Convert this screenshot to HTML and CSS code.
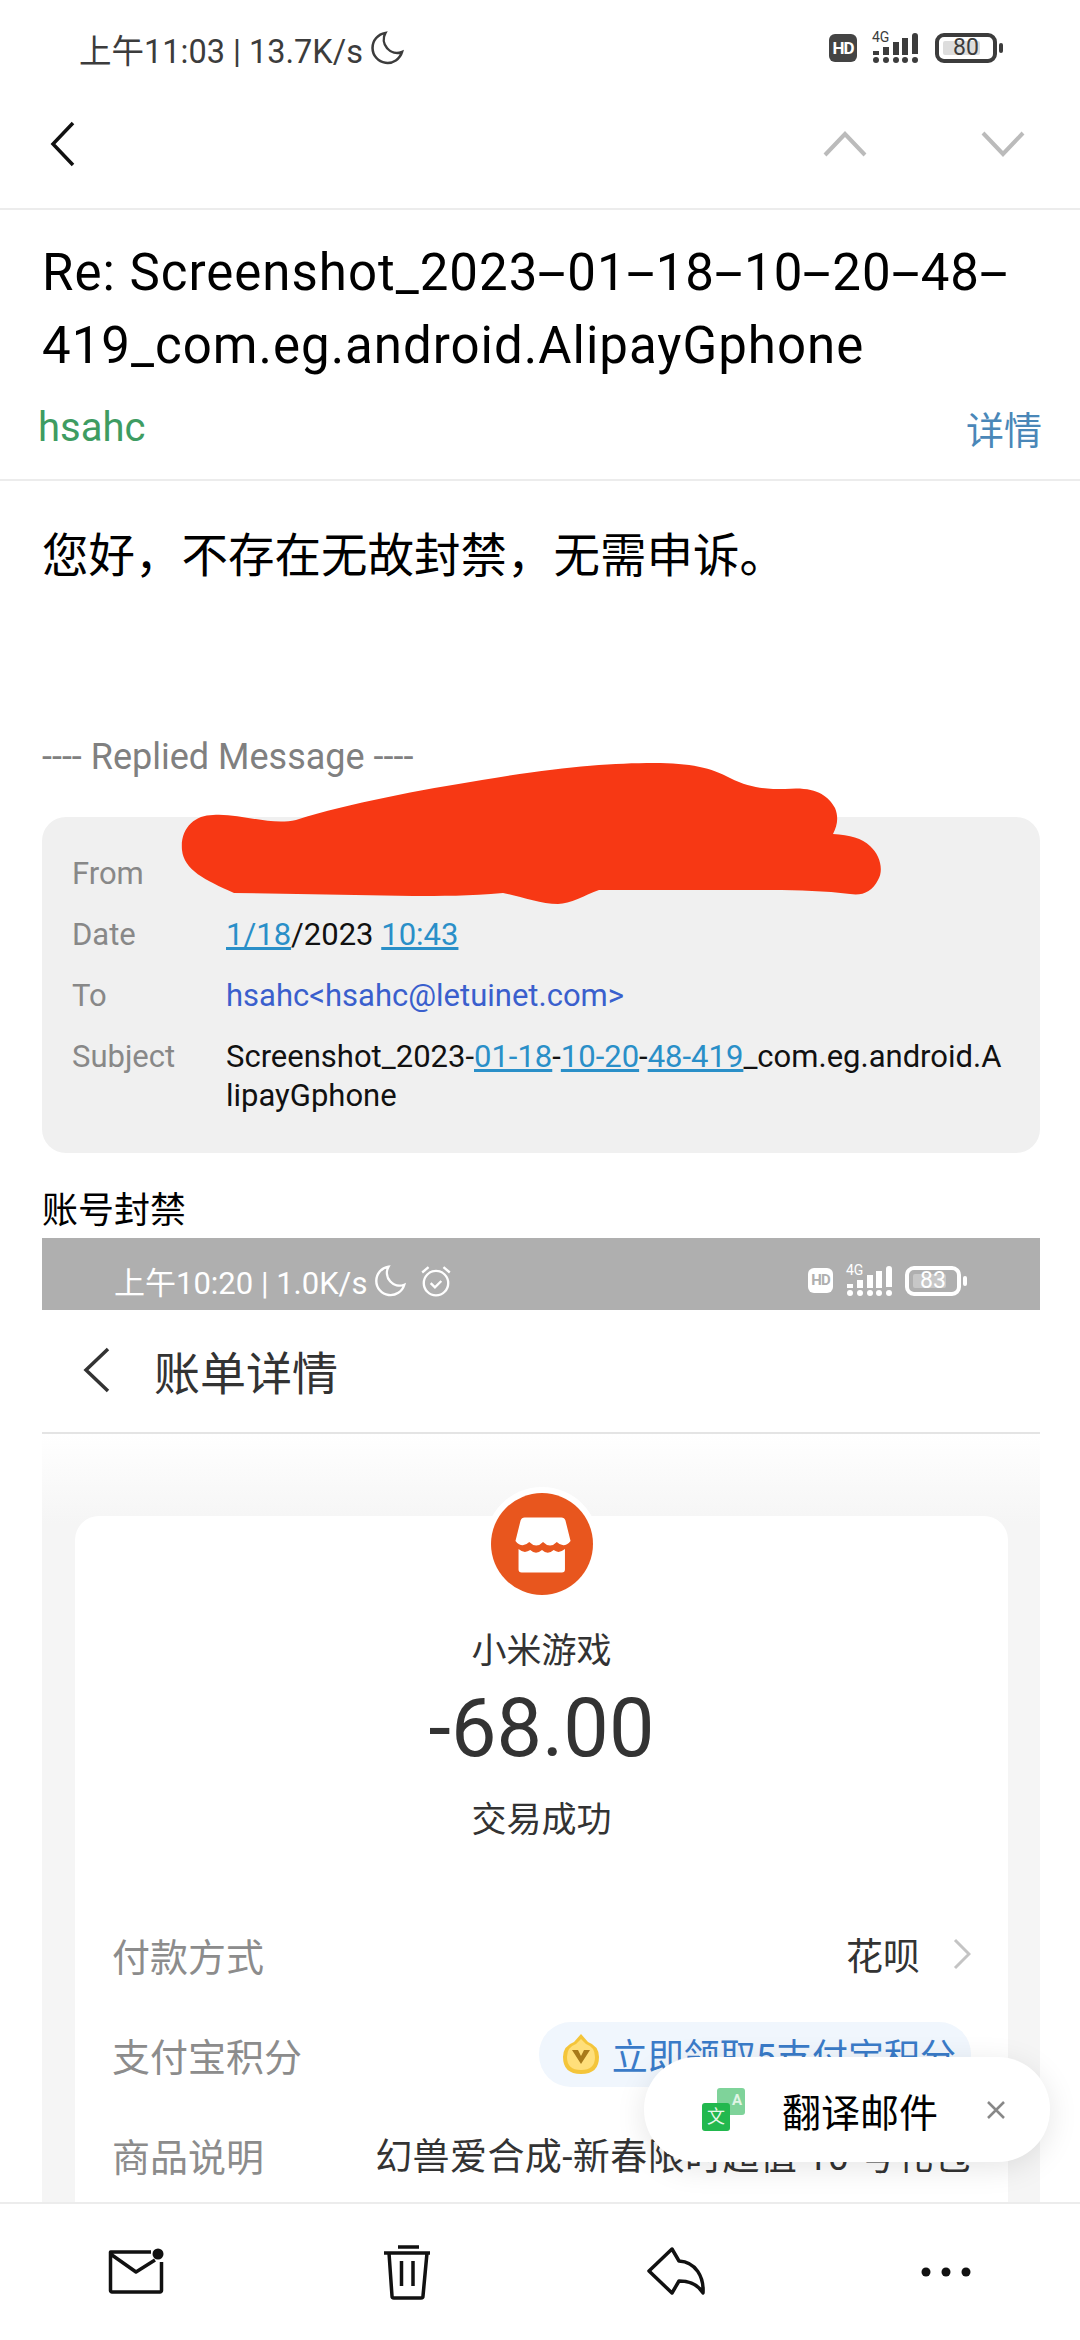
FILE: index.html
```html
<!DOCTYPE html>
<html lang="zh-CN">
<head>
    <meta charset="UTF-8">
    <meta name="viewport" content="width=device-width, initial-scale=1.0">
    <title>Re: Screenshot</title>
    <link rel="stylesheet" href="styles.css">
</head>
<body>
<div class="page">
    <div class="statusbar">
        <div class="status-left">
            <span>上午11:03 | 13.7K/s</span>
            <svg class="moon" viewBox="0 0 24 24"><path d="M11 2.5a9.5 9.5 0 1 0 10.5 12A8.5 8.5 0 0 1 11 2.5z"/></svg>
        </div>
        <div class="status-right">
            <span class="hd">HD</span>
            <div class="signal">
                <span class="net">4G</span>
                <svg viewBox="0 0 46 30"><path d="M1 18h6v4H1zM11 14h6v8h-6zM21 9h6v13h-6zM30 5h6v17h-6zM40 3a2.5 2.5 0 0 1 6 0v18h-6z"/><circle cx="4" cy="27" r="3"/><circle cx="14" cy="27" r="3"/><circle cx="24" cy="27" r="3"/><circle cx="33" cy="27" r="3"/><circle cx="43" cy="27" r="3"/></svg>
            </div>
            <div class="battery"><span class="battery-level" style="width: 80%"></span><span class="battery-num">80</span></div>
            <span class="battery-tip"></span>
        </div>
    </div>

    <div class="toolbar">
        <svg class="back" viewBox="0 0 26 46"><path d="M23 2L3 23l20 21"/></svg>
        <div class="toolbar-arrows">
            <svg class="arrow" viewBox="0 0 44 26"><path d="M2 24L22 3l20 21"/></svg>
            <svg class="arrow" viewBox="0 0 44 26"><path d="M2 2l20 21L42 2"/></svg>
        </div>
    </div>

    <div class="main">
        <div class="mail-head">
            <h1 class="subject">Re: Screenshot_2023<span class="dash">-</span>01<span class="dash">-</span>18<span class="dash">-</span>10<span class="dash">-</span>20<span class="dash">-</span>48<span class="dash">-</span>419_com.eg.android.AlipayGphone</h1>
            <div class="sender-row">
                <span class="sender">hsahc</span>
                <span class="detail-link">详情</span>
            </div>
        </div>

        <div class="mail-body">
            <p class="message">您好，不存在无故封禁，无需申诉。</p>
            <div class="replied">---- Replied Message ----</div>

            <div class="quote">
                <div class="quote-label">From</div><div class="quote-value"></div>
                <div class="quote-label">Date</div><div class="quote-value"><a>1/18</a>/2023 <a>10:43</a></div>
                <div class="quote-label">To</div><div class="quote-value to">hsahc&lt;hsahc@letuinet.com&gt;</div>
                <div class="quote-label">Subject</div><div class="quote-value">Screenshot_2023-<a>01-18</a>-<a>10-20</a>-<a>48-419</a>_com.eg.android.A<br>lipayGphone</div>
            </div>

            <div class="reason">账号封禁</div>

            <div class="shot">
                <div class="statusbar shot-status">
                    <div class="status-left">
                        <span>上午10:20 | 1.0K/s</span>
                        <svg class="moon" viewBox="0 0 24 24"><path d="M11 2.5a9.5 9.5 0 1 0 10.5 12A8.5 8.5 0 0 1 11 2.5z"/></svg>
                        <svg class="alarm" viewBox="0 0 32 32"><circle cx="16" cy="18" r="11.5"/><path d="M11 18l4 4 6-6M3 8l6-5M29 8l-6-5"/></svg>
                    </div>
                    <div class="status-right">
                        <span class="hd">HD</span>
                        <div class="signal">
                            <span class="net">4G</span>
                            <svg viewBox="0 0 46 30"><path d="M1 18h6v4H1zM11 14h6v8h-6zM21 9h6v13h-6zM30 5h6v17h-6zM40 3a2.5 2.5 0 0 1 6 0v18h-6z"/><circle cx="4" cy="27" r="3"/><circle cx="14" cy="27" r="3"/><circle cx="24" cy="27" r="3"/><circle cx="33" cy="27" r="3"/><circle cx="43" cy="27" r="3"/></svg>
                        </div>
                        <div class="battery"><span class="battery-level" style="width: 83%"></span><span class="battery-num">83</span></div>
                        <span class="battery-tip"></span>
                    </div>
                </div>
                <div class="shot-nav">
                    <svg class="shot-back" viewBox="0 0 28 46"><path d="M25 2L3 23l22 21"/></svg>
                    <span>账单详情</span>
                </div>
                <div class="shot-body">
                    <div class="bill">
                        <div class="bill-logo">
                            <svg viewBox="0 0 100 100"><circle cx="50" cy="50" r="50" fill="#e8561e"/><path fill="#fff" d="M31 24H69q3 0 4 3l5 20q-6.5 8-13.5 1q-6.5 7-13.5 0q-6.5 7-13.5 0q-7 7-13.5-1l5-20q1-3 4-3z"/><path fill="#fff" d="M27 55q5.5 5 11.5 1q5.5 5 11.5 0q5.5 5 11.5 0q5 4 11-1V75q0 3-3 3H30q-3 0-3-3z"/></svg>
                        </div>
                        <div class="bill-name">小米游戏</div>
                        <div class="bill-amount">-68.00</div>
                        <div class="bill-state">交易成功</div>
                        <div class="bill-rows">
                            <div class="bill-row">
                                <span class="bill-key">付款方式</span>
                                <span class="bill-val">花呗<svg class="chevron" viewBox="0 0 18 32"><path d="M2 2l14 14L2 30"/></svg></span>
                            </div>
                            <div class="bill-row">
                                <span class="bill-key">支付宝积分</span>
                                <span class="points">
                                    <svg class="coin" viewBox="0 0 38 42"><path fill="#f4c53a" d="M19 1l7 8q11 4 11 15 0 17-18 17T1 24Q1 13 12 9z"/><path fill="#ffdf7a" d="M19 6l5 5q9 3 9 13 0 13-14 13T5 24q0-10 9-13z"/><path fill="#a87a1a" d="M10 17h6l3 6 3-6h6l-9 14z"/></svg>
                                    立即领取5支付宝积分
                                </span>
                            </div>
                            <div class="bill-row">
                                <span class="bill-key">商品说明</span>
                                <span class="bill-val long">幻兽爱合成-新春限时超值 10 号礼包</span>
                            </div>
                        </div>
                    </div>
                </div>
            </div>
        </div>
    </div>

    <div class="bottombar">
        <svg class="tool" viewBox="0 0 60 60"><path d="M44 10H3.5v38.5a1.5 1.5 0 0 0 1.5 1.5h48a1.5 1.5 0 0 0 1.5-1.5V20M3.5 12L29 30l19-12"/><circle class="solid" cx="51" cy="12" r="5.5"/></svg>
        <svg class="tool" viewBox="0 0 60 60"><path d="M7 11h46M21 5h21M12 11l3 43a2 2 0 0 0 2 2h27a2 2 0 0 0 2-2l4-43M24.5 19v25M36 19v25"/></svg>
        <svg class="tool" viewBox="0 0 60 60"><path d="M26 7L3 29l23 22 7-12c12 0 20 5 24 12 1-16-7-31-24-32z"/></svg>
        <svg class="tool" viewBox="0 0 60 60"><circle class="solid" cx="10" cy="30" r="4.5"/><circle class="solid" cx="30" cy="30" r="4.5"/><circle class="solid" cx="50" cy="30" r="4.5"/></svg>
    </div>

    <!-- scribble over the sender -->
    <svg class="redact" viewBox="170 750 730 170"><path d="M182 850C180 828 195 815 213 815C240 813 270 826 296 820C350 803 420 790 482 780C560 767 610 763 654 763C690 763 712 768 730 778C750 788 765 789 785 789C815 786 828 795 835 808C839 818 837 826 833 834C850 835 862 838 870 846C880 855 884 870 878 880C872 892 862 896 850 894C825 891 800 890 771 890L599 890C585 895 570 904 558 904C540 904 520 896 503 893C470 896 440 896 413 896L234 893C205 880 184 870 182 850Z"/></svg>

    <div class="translate">
        <svg class="translate-icon" viewBox="0 0 43 43"><rect x="15" y="0" width="28" height="27" rx="3" fill="#7fd39a"/><rect x="0" y="15" width="28" height="28" rx="3" fill="#22b84e"/><text x="14" y="35" class="glyph-zh">文</text><text x="35" y="17" class="glyph-a">A</text></svg>
        <span>翻译邮件</span>
        <svg class="translate-close" viewBox="0 0 20 20"><path d="M2 2l16 16M18 2L2 18"/></svg>
    </div>
</div>
</body>
</html>
```

FILE: styles.css
```css
* {
    box-sizing: border-box;
}
html, body {
    margin: 0;
    padding: 0;
}
body {
    font-family: Roboto, "Noto Sans CJK SC", sans-serif;
    background: #fff;
    color: #000;
}
.page {
    position: relative;
    width: 1080px;
    height: 2340px;
    display: flex;
    flex-direction: column;
    overflow: hidden;
    background: #fff;
}

/* status bar */
.statusbar {
    display: flex;
    align-items: center;
    justify-content: space-between;
    height: 96px;
    padding: 0 77px 0 79px;
    color: #3c3c3c;
    flex-shrink: 0;
}
.status-left {
    display: flex;
    align-items: center;
    gap: 5px;
    font-size: 32.5px;
}
.status-right {
    display: flex;
    align-items: center;
}
.moon {
    width: 38px;
    height: 38px;
    fill: none;
    stroke: currentColor;
    stroke-width: 1.6;
}
.alarm {
    width: 34px;
    height: 34px;
    margin-left: 6px;
    fill: none;
    stroke: currentColor;
    stroke-width: 2.2;
}
.hd {
    width: 28px;
    height: 28px;
    border-radius: 6px;
    background: #444;
    color: #fff;
    font-size: 17px;
    font-weight: 700;
    line-height: 28px;
    text-align: center;
    letter-spacing: -1px;
}
.signal {
    position: relative;
    width: 46px;
    height: 30px;
    margin-left: 15px;
}
.signal svg {
    display: block;
    width: 46px;
    height: 30px;
    fill: currentColor;
}
.net {
    position: absolute;
    left: 0;
    top: -3px;
    font-size: 14px;
    line-height: 14px;
}
.battery {
    position: relative;
    width: 62px;
    height: 30px;
    margin-left: 17px;
    padding: 4px;
    border: 4px solid currentColor;
    border-radius: 9px;
    display: flex;
}
.battery-level {
    background: #ddd;
    border-radius: 2px;
}
.battery-num {
    position: absolute;
    left: 0;
    right: 0;
    top: 0;
    line-height: 22px;
    font-size: 23px;
    text-align: center;
}
.battery-tip {
    width: 4px;
    height: 10px;
    margin-left: 2px;
    border-radius: 2px;
    background: currentColor;
}

/* top toolbar */
.toolbar {
    display: flex;
    align-items: center;
    justify-content: space-between;
    height: 114px;
    padding: 0 55px 16px 50px;
    border-bottom: 2px solid #ececec;
    flex-shrink: 0;
}
.back {
    width: 26px;
    height: 46px;
    fill: none;
    stroke: #111;
    stroke-width: 3.5;
}
.toolbar-arrows {
    display: flex;
    gap: 114px;
}
.arrow {
    width: 44px;
    height: 26px;
    fill: none;
    stroke: #bbb;
    stroke-width: 4;
}

.main {
    flex: 1;
    overflow: hidden;
}

/* subject and sender */
.mail-head {
    padding: 26px 40px 27px 42px;
    border-bottom: 2px solid #ececec;
}
.subject {
    margin: 0;
    font-size: 51px;
    font-weight: 400;
    line-height: 73px;
    letter-spacing: 1px;
}
/* the hyphens of this font are long in the mail app */
.dash {
    display: inline-block;
    width: 29px;
    text-align: center;
    transform: scaleX(2);
}
.sender-row {
    display: flex;
    align-items: center;
    justify-content: space-between;
    height: 50px;
    margin-top: 20px;
    margin-left: -4px;
    margin-right: -2px;
    font-size: 40px;
}
.sender {
    color: #3e9c62;
}
.detail-link {
    color: #4a87b8;
    font-size: 38px;
}

/* body of the mail */
.mail-body {
    padding: 0 40px 0 42px;
}
.message {
    margin: 0;
    padding-top: 45px;
    font-size: 46.5px;
    line-height: 60px;
}
.replied {
    margin-top: 151px;
    font-size: 36px;
    line-height: 40px;
    color: #808080;
}
.quote {
    display: grid;
    grid-template-columns: 154px 1fr;
    row-gap: 22px;
    margin-top: 40px;
    padding: 37px 26px 38px 30px;
    border-radius: 24px;
    background: #f0f0f0;
    font-size: 31px;
    line-height: 39px;
}
.quote-label {
    color: #888;
}
.quote-value {
    min-height: 39px;
    color: #111;
}
.quote-value a {
    color: #2a8fc8;
    text-decoration: underline;
}
.quote-value.to {
    color: #3a5fcd;
}
.reason {
    margin-top: 33px;
    font-size: 36px;
    line-height: 50px;
}

/* the attached screenshot */
.shot {
    margin-top: 2px;
}
.shot-status {
    height: 72px;
    padding: 13px 73px 0 72px;
    background: #afafaf;
    color: #fff;
}
.shot-status .status-left {
    font-size: 31px;
}
.shot-status .moon {
    width: 36px;
    height: 36px;
}
.shot-status .hd {
    background: #fff;
    color: #afafaf;
    width: 25px;
    height: 25px;
    font-size: 15px;
    line-height: 25px;
}
.shot-status .signal {
    margin-left: 13px;
}
.shot-status .battery {
    width: 56px;
    height: 30px;
    margin-left: 13px;
}
.shot-status .battery-level {
    background: rgba(255, 255, 255, 0.3);
}
.shot-nav {
    display: flex;
    align-items: center;
    gap: 43px;
    height: 124px;
    padding: 0 0 3px 41px;
    border-bottom: 2px solid #e4e4e4;
    font-size: 46px;
    color: #333;
}
.shot-back {
    width: 28px;
    height: 46px;
    fill: none;
    stroke: #333;
    stroke-width: 3.5;
}
.shot-body {
    padding: 82px 32px 0 33px;
    background: linear-gradient(#fff, #f5f5f5 90px);
}
.bill {
    position: relative;
    padding-top: 113px;
    border-radius: 24px 24px 0 0;
    background: #fff;
    text-align: center;
    color: #333;
}
.bill-logo {
    position: absolute;
    left: 50%;
    top: -29px;
    width: 114px;
    height: 114px;
    margin-left: -57px;
    padding: 6px;
    border-radius: 50%;
    background: #fff;
}
.bill-logo svg {
    display: block;
}
.bill-name, .bill-state {
    font-size: 35px;
    line-height: 46px;
}
.bill-amount {
    margin-top: 9px;
    font-size: 81px;
    line-height: 90px;
}
.bill-state {
    margin-top: 24px;
}
.bill-rows {
    margin-top: 60px;
    padding: 0 37px;
}
.bill-row {
    display: flex;
    align-items: center;
    justify-content: space-between;
    height: 100px;
    font-size: 38px;
}
.bill-key {
    color: #8c8c8c;
}
.bill-val {
    display: flex;
    align-items: center;
    font-size: 37px;
    white-space: nowrap;
}
.bill-val.long {
    letter-spacing: 0.4px;
}
.chevron {
    width: 18px;
    height: 32px;
    margin-left: 33px;
    fill: none;
    stroke: #c4c4c4;
    stroke-width: 3;
}
.points {
    display: flex;
    align-items: center;
    height: 65px;
    padding: 0 15px 0 23px;
    border-radius: 32px;
    background: #f0f6fd;
    color: #3a7bc8;
    font-size: 36px;
    white-space: nowrap;
}
.coin {
    width: 38px;
    height: 42px;
    margin-right: 12px;
}

/* bottom actions */
.bottombar {
    display: flex;
    align-items: center;
    justify-content: space-between;
    height: 138px;
    padding: 0 104px 0 107px;
    border-top: 2px solid #ececec;
    background: #fff;
    flex-shrink: 0;
}
.tool {
    width: 60px;
    height: 60px;
    fill: none;
    stroke: #111;
    stroke-width: 3.5;
    stroke-linejoin: round;
}
.tool .solid {
    fill: #111;
    stroke: none;
}

/* things lying over the mail */
.redact {
    position: absolute;
    left: 170px;
    top: 750px;
    width: 730px;
    height: 170px;
    fill: #f73814;
}
.translate {
    position: absolute;
    left: 644px;
    top: 2057px;
    width: 406px;
    height: 105px;
    display: flex;
    align-items: center;
    padding-left: 58px;
    border-radius: 52px;
    background: #fff;
    box-shadow: 0 6px 30px rgba(0, 0, 0, 0.1);
    font-size: 39px;
}
.translate-icon {
    width: 43px;
    height: 43px;
    margin-right: 37px;
}
.glyph-zh {
    font-size: 18px;
    fill: #e6f7ea;
    text-anchor: middle;
}
.glyph-a {
    font-size: 15px;
    font-weight: 700;
    fill: #dff5e5;
    text-anchor: middle;
}
.translate-close {
    width: 20px;
    height: 20px;
    margin-left: 48px;
    fill: none;
    stroke: #888;
    stroke-width: 2.5;
}
```
